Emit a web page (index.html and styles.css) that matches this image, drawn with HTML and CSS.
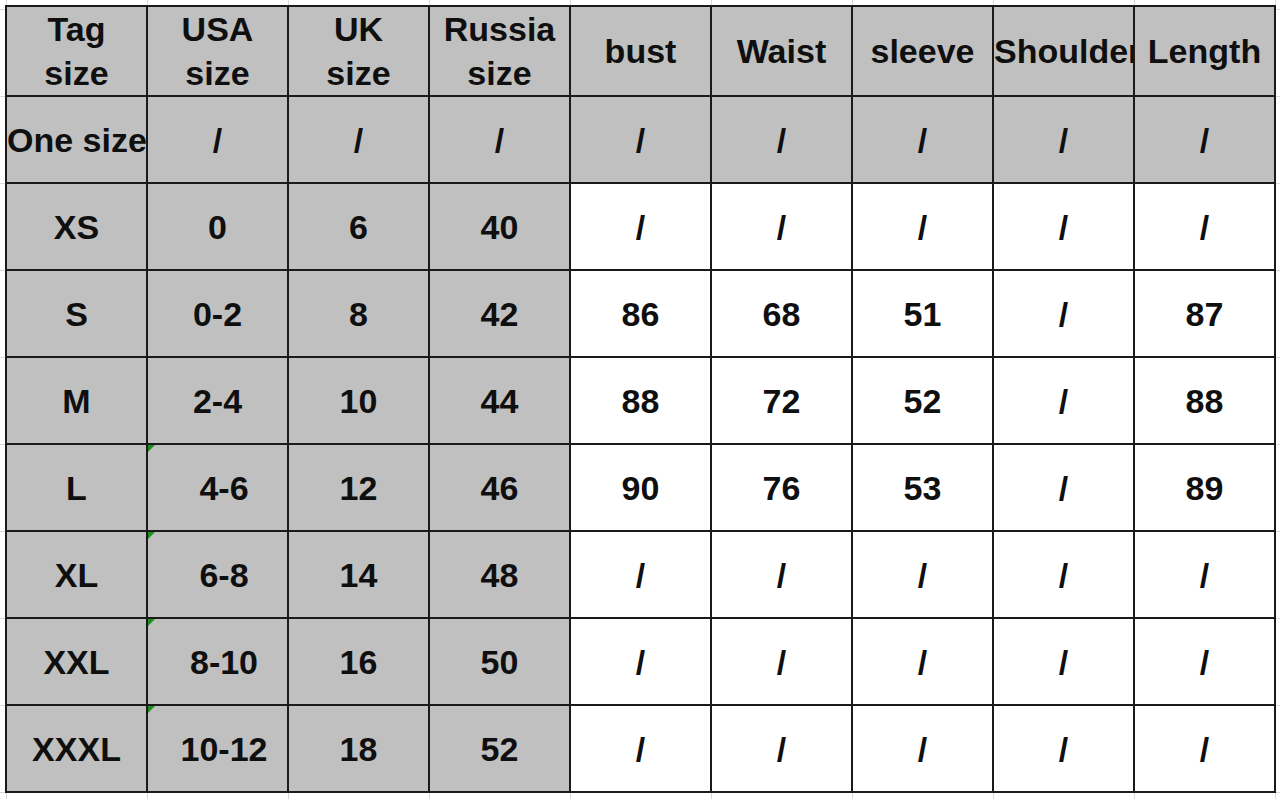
FILE: index.html
```html
<!DOCTYPE html>
<html lang="en">
<head>
<meta charset="utf-8">
<title>Size chart</title>
<link rel="stylesheet" href="styles.css">
</head>
<body>
<div class="sheet">
  <div class="cell g head"><span>Tag</span><span>size</span></div>
  <div class="cell g head"><span>USA</span><span>size</span></div>
  <div class="cell g head"><span>UK</span><span>size</span></div>
  <div class="cell g head"><span>Russia</span><span>size</span></div>
  <div class="cell g">bust</div>
  <div class="cell g">Waist</div>
  <div class="cell g">sleeve</div>
  <div class="cell g">Shoulder</div>
  <div class="cell g">Length</div>

  <div class="cell g">One size</div>
  <div class="cell g">/</div>
  <div class="cell g">/</div>
  <div class="cell g">/</div>
  <div class="cell g">/</div>
  <div class="cell g">/</div>
  <div class="cell g">/</div>
  <div class="cell g">/</div>
  <div class="cell g">/</div>

  <div class="cell g">XS</div>
  <div class="cell g">0</div>
  <div class="cell g">6</div>
  <div class="cell g">40</div>
  <div class="cell">/</div>
  <div class="cell">/</div>
  <div class="cell">/</div>
  <div class="cell">/</div>
  <div class="cell">/</div>

  <div class="cell g">S</div>
  <div class="cell g">0-2</div>
  <div class="cell g">8</div>
  <div class="cell g">42</div>
  <div class="cell">86</div>
  <div class="cell">68</div>
  <div class="cell">51</div>
  <div class="cell">/</div>
  <div class="cell">87</div>

  <div class="cell g">M</div>
  <div class="cell g">2-4</div>
  <div class="cell g">10</div>
  <div class="cell g">44</div>
  <div class="cell">88</div>
  <div class="cell">72</div>
  <div class="cell">52</div>
  <div class="cell">/</div>
  <div class="cell">88</div>

  <div class="cell g">L</div>
  <div class="cell g txt">4-6</div>
  <div class="cell g">12</div>
  <div class="cell g">46</div>
  <div class="cell">90</div>
  <div class="cell">76</div>
  <div class="cell">53</div>
  <div class="cell">/</div>
  <div class="cell">89</div>

  <div class="cell g">XL</div>
  <div class="cell g txt">6-8</div>
  <div class="cell g">14</div>
  <div class="cell g">48</div>
  <div class="cell">/</div>
  <div class="cell">/</div>
  <div class="cell">/</div>
  <div class="cell">/</div>
  <div class="cell">/</div>

  <div class="cell g">XXL</div>
  <div class="cell g txt">8-10</div>
  <div class="cell g">16</div>
  <div class="cell g">50</div>
  <div class="cell">/</div>
  <div class="cell">/</div>
  <div class="cell">/</div>
  <div class="cell">/</div>
  <div class="cell">/</div>

  <div class="cell g">XXXL</div>
  <div class="cell g txt">10-12</div>
  <div class="cell g">18</div>
  <div class="cell g">52</div>
  <div class="cell">/</div>
  <div class="cell">/</div>
  <div class="cell">/</div>
  <div class="cell">/</div>
  <div class="cell">/</div>
</div>
</body>
</html>
```

FILE: styles.css
```css
html, body {
  margin: 0;
  padding: 0;
}

body {
  width: 1280px;
  height: 799px;
  overflow: hidden;
  background-color: #ffffff;
  background-image:
    repeating-linear-gradient(90deg, #dadada 0 1px, transparent 1px 141px),
    repeating-linear-gradient(180deg, #dadada 0 1px, transparent 1px 87px);
  background-position: 6px 0, 0 9px;
  font-family: "Liberation Sans", Arial, sans-serif;
}

.sheet {
  display: grid;
  grid-template-columns: repeat(9, 139px);
  grid-template-rows: 88px repeat(8, 85px);
  gap: 2px;
  width: max-content;
  margin: 5px 0 0 5px;
  border: 2px solid #1a1a1a;
  background: #1a1a1a;
}

.cell {
  position: relative;
  display: flex;
  flex-direction: column;
  justify-content: center;
  background: #ffffff;
  color: #0f0f0f;
  font-weight: bold;
  font-size: 34px;
  line-height: 40px;
  text-align: center;
  white-space: nowrap;
  overflow: hidden;
}

.cell.g {
  background: #c0c0c0;
}

.cell.head {
  line-height: 44px;
}

.cell.txt {
  padding-left: 13px;
}

.cell.txt::before {
  content: "";
  position: absolute;
  left: 0;
  top: 0;
  width: 0;
  height: 0;
  border-top: 7px solid #1d8f1d;
  border-right: 7px solid transparent;
}
```
